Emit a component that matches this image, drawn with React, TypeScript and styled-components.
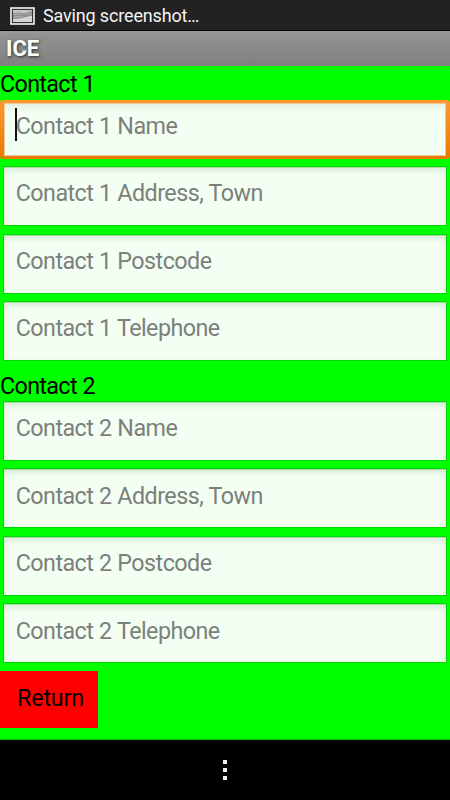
import React from "react";
import styled, { createGlobalStyle, css } from "styled-components";

const GlobalStyle = createGlobalStyle`
  * { box-sizing: border-box; }
  body {
    margin: 0;
    background: #000;
    font-family: Roboto, "Noto Sans", sans-serif;
  }
`;

const Screen = styled.div`
  width: 450px;
  height: 800px;
  display: flex;
  flex-direction: column;
  overflow: hidden;
  background: #000;
`;

const StatusBar = styled.header`
  flex: 0 0 31px;
  display: flex;
  align-items: center;
  gap: 8px;
  padding: 1px 0 0 10px;
  background: #222;
  border-bottom: 1px solid #000;
  color: #f4f4f4;
  font-size: 18px;
`;

const StatusText = styled.span`
  line-height: 24px;
  letter-spacing: -0.16px;
`;

const TitleBar = styled.h1`
  flex: 0 0 35px;
  margin: 0;
  padding-left: 6px;
  background: linear-gradient(#9c9c9c, #929292 10%, #808080);
  color: #fff;
  font-size: 22px;
  font-weight: 700;
  line-height: 35px;
  text-shadow: 1px 1px 3px rgba(0, 0, 0, 0.65);
`;

const Content = styled.main`
  flex: 0 0 674px;
  background: #0f0;
  border-bottom: 1px solid #00b400;
`;

const Group = styled.section`
  height: 302.2px;
  padding-top: 4px;
`;

const GroupLabel = styled.h2`
  margin: 0;
  height: 29.7px;
  color: #000;
  font-size: 23.3px;
  font-weight: 400;
  letter-spacing: -0.65px;
  word-spacing: 0.5px;
  line-height: 29px;
`;

const Fields = styled.div`
  display: flex;
  flex-direction: column;
  gap: 9.5px;
  padding: 0 4px;
`;

const FieldFrame = styled.div<{ $focused: boolean }>`
  position: relative;
  height: 58px;
  background: #f2fff2;
  box-shadow: 0 0 0 1px #00d600, inset 0 1px 0 #a6dca6, inset 0 3px 6px rgba(0, 60, 0, 0.13);

  ${({ $focused }) =>
    $focused &&
    css`
      height: 59px;
      margin: 0 -4px -1px;
      border: solid transparent;
      border-width: 3px 4px;
      border-radius: 3px;
      background:
        linear-gradient(rgba(0, 60, 0, 0.07), rgba(0, 60, 0, 0) 9px) padding-box,
        linear-gradient(#f2fff2, #f2fff2) padding-box,
        linear-gradient(#ff9830, #eb7900) border-box;
      box-shadow: inset 0 0 0 1px #efc99c;
    `}
`;

const Input = styled.input<{ $focused: boolean }>`
  display: block;
  width: 100%;
  height: 52.6px;
  padding: 0 11.7px;
  margin-top: ${({ $focused }) => ($focused ? "-3px" : "0")};
  border: 0;
  outline: 0;
  background: transparent;
  font: 23.3px Roboto, "Noto Sans", sans-serif;
  letter-spacing: -0.54px;
  word-spacing: 0.5px;

  &::placeholder {
    color: #7c7f7c;
    opacity: 1;
  }
`;

const Caret = styled.span`
  position: absolute;
  left: 11px;
  top: 5px;
  width: 2px;
  height: 33px;
  background: #101010;
`;

const ReturnButton = styled.button`
  display: block;
  width: 98px;
  height: 57px;
  margin-top: 0.6px;
  padding: 0 0 3px 3px;
  border: 0;
  background: #f00;
  color: #000;
  font: 23.3px Roboto, "Noto Sans", sans-serif;
  letter-spacing: -0.15px;
`;

const NavBar = styled.nav`
  flex: 1;
  display: flex;
  flex-direction: column;
  align-items: center;
  padding-top: 20px;
  gap: 4px;
`;

const Dot = styled.i`
  width: 4px;
  height: 4px;
  background: #eee;
`;

const groups = [
  {
    title: "Contact 1",
    fields: ["Contact 1 Name", "Conatct 1 Address, Town", "Contact 1 Postcode", "Contact 1 Telephone"],
  },
  {
    title: "Contact 2",
    fields: ["Contact 2 Name", "Contact 2 Address, Town", "Contact 2 Postcode", "Contact 2 Telephone"],
  },
];

const PictureIcon = () => (
  <svg width="25" height="18" viewBox="0 0 25 18" aria-hidden="true">
    <rect x="1" y="1" width="23" height="16" fill="#333" stroke="#f5f5f5" strokeWidth="1.6" />
    <rect x="3" y="3" width="19" height="12" fill="#aaa" />
    <path d="M3 3H22V5L15 7L10 6.3L3 7Z" fill="#c4c4c4" />
    <path d="M3 11.5L10 11L16 9.5L22 8V15H3Z" fill="#d5d5d5" />
    <path d="M3 6.5L9 6L14 7L22 4.5M3 9L10 8L15 8.5L22 6.5M3 11.5L10 11L16 9.5L22 8" fill="none" stroke="#7c7c7c" strokeWidth="0.8" />
  </svg>
);

export default function App() {
  return (
    <>
      <GlobalStyle />
      <Screen>
        <StatusBar>
          <PictureIcon />
          <StatusText>Saving screenshot…</StatusText>
        </StatusBar>
        <TitleBar>ICE</TitleBar>
        <Content>
          {groups.map((group, g) => (
            <Group key={group.title}>
              <GroupLabel>{group.title}</GroupLabel>
              <Fields>
                {group.fields.map((name, i) => {
                  const focused = g === 0 && i === 0;
                  return (
                    <FieldFrame key={name} $focused={focused}>
                      <Input $focused={focused} placeholder={name} />
                      {focused && <Caret />}
                    </FieldFrame>
                  );
                })}
              </Fields>
            </Group>
          ))}
          <ReturnButton>Return</ReturnButton>
        </Content>
        <NavBar>
          <Dot />
          <Dot />
          <Dot />
        </NavBar>
      </Screen>
    </>
  );
}
